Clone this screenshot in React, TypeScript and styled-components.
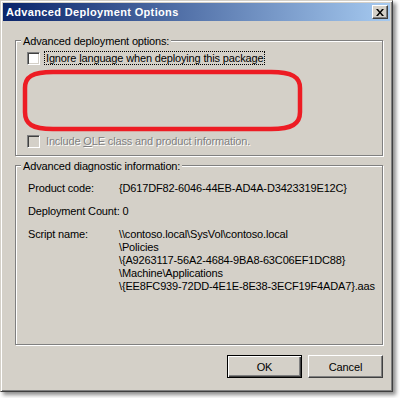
import React from "react";
import styled, { createGlobalStyle } from "styled-components";

const GlobalStyle = createGlobalStyle`
  html, body { margin: 0; padding: 0; background: #ffffff; }
  body { font-family: "Liberation Sans", Arial, sans-serif; font-size: 11px; }
  * { box-sizing: border-box; }
`;

const Page = styled.div`
  width: 400px;
  height: 398px;
`;

const Window = styled.div`
  width: 393px;
  height: 392px;
  background: #d4d0c8;
  border: 1px solid;
  border-color: #d4d0c8 #404040 #404040 #d4d0c8;
  box-shadow: inset 1px 1px 0 #ffffff, inset -1px -1px 0 #808080,
    3px 3px 4px rgba(0, 0, 0, 0.45);
  padding: 2px;
  display: flex;
  flex-direction: column;
`;

const TitleBar = styled.div`
  height: 18px;
  flex: none;
  display: flex;
  align-items: center;
  padding-left: 3px;
  background: linear-gradient(to right, #0a246a, #a6caf0);
  color: #ffffff;
  font-weight: bold;
  font-size: 11px;
`;

const TitleText = styled.span`
  line-height: 13px;
  letter-spacing: 0.35px;
`;

const CloseButton = styled.div`
  width: 16px;
  height: 14px;
  margin-left: auto;
  margin-right: 2px;
  background: #d4d0c8;
  border: 1px solid;
  border-color: #ffffff #404040 #404040 #ffffff;
  box-shadow: inset -1px -1px 0 #808080;
  display: flex;
  align-items: center;
  justify-content: center;
`;

const Body = styled.div`
  flex: 1;
  display: flex;
  flex-direction: column;
  padding: 19px 7px 11px 12px;
  color: #000000;
  letter-spacing: -0.15px;
`;

const GroupBox = styled.div<{ $h: number; $gap?: number }>`
  height: ${(p) => p.$h}px;
  margin-top: ${(p) => p.$gap ?? 0}px;
  border: 1px solid #808080;
  box-shadow: 1px 1px 0 #ffffff, inset 1px 1px 0 #ffffff;
  display: flex;
  flex-direction: column;
  align-items: flex-start;
`;

const GroupTitle = styled.div`
  margin: -6px 0 0 5px;
  padding: 0 2px;
  background: #d4d0c8;
  line-height: 13px;
`;

const GroupContent = styled.div<{ $pad: number; $top: number }>`
  padding-left: ${(p) => p.$pad}px;
  margin-top: ${(p) => p.$top}px;
  display: flex;
  flex-direction: column;
  align-items: flex-start;
  width: 100%;
`;

const CheckRow = styled.div<{ $top?: number }>`
  display: flex;
  align-items: center;
  height: 14px;
  gap: 4px;
  margin-top: ${(p) => p.$top ?? 0}px;
`;

const CheckBox = styled.span<{ $disabled?: boolean }>`
  width: 13px;
  height: 13px;
  flex: none;
  background: ${(p) => (p.$disabled ? "#d4d0c8" : "#ffffff")};
  border: 1px solid;
  border-color: #808080 #ffffff #ffffff #808080;
  box-shadow: inset 1px 1px 0 #404040, inset -1px -1px 0 #d4d0c8;
`;

const CheckLabel = styled.span<{ $focus?: boolean; $disabled?: boolean }>`
  line-height: 12px;
  padding: 0 1px;
  border: 1px ${(p) => (p.$focus ? "dotted #000000" : "solid transparent")};
  color: ${(p) => (p.$disabled ? "#808080" : "#000000")};
  text-shadow: ${(p) => (p.$disabled ? "1px 1px 0 #ffffff" : "none")};
  white-space: nowrap;
`;

const AccessKey = styled.span`
  text-decoration: underline;
`;

const Annotation = styled.svg`
  display: block;
  margin: 3px 0 0 -6px;
  flex: none;
`;

const InfoGrid = styled.div`
  display: grid;
  grid-template-columns: 91px auto;
  row-gap: 10px;
  line-height: 13px;
  white-space: nowrap;
`;

const InfoWide = styled.div`
  grid-column: 1 / span 2;
`;

const InfoValue = styled.div`
  display: flex;
  flex-direction: column;
`;

const ButtonRow = styled.div`
  display: flex;
  justify-content: flex-end;
  gap: 6px;
  margin-top: 10px;
`;

const Button = styled.div<{ $default?: boolean }>`
  width: 75px;
  height: 23px;
  background: #d4d0c8;
  display: flex;
  align-items: center;
  justify-content: center;
  font-size: 11px;
  color: #000000;
  border: 1px solid;
  border-color: ${(p) =>
    p.$default ? "#000000" : "#ffffff #404040 #404040 #ffffff"};
  box-shadow: ${(p) =>
    p.$default
      ? "inset 1px 1px 0 #ffffff, inset -1px -1px 0 #404040, inset -2px -2px 0 #808080"
      : "inset -1px -1px 0 #808080"};
`;

const scriptLines = [
  "\\\\contoso.local\\SysVol\\contoso.local",
  "\\Policies",
  "\\{A9263117-56A2-4684-9BA8-63C06EF1DC88}",
  "\\Machine\\Applications",
  "\\{EE8FC939-72DD-4E1E-8E38-3ECF19F4ADA7}.aas",
];

export default function App() {
  return (
    <Page>
      <GlobalStyle />
      <Window>
        <TitleBar>
          <TitleText>Advanced Deployment Options</TitleText>
          <CloseButton>
            <svg width="8" height="7" viewBox="0 0 8 7">
              <path d="M0 0h2l2 2.5L6 0h2L5 3.5 8 7H6L4 4.5 2 7H0l3-3.5z" fill="#000" />
            </svg>
          </CloseButton>
        </TitleBar>
        <Body>
          <GroupBox $h={116}>
            <GroupTitle>Advanced deployment options:</GroupTitle>
            <GroupContent $pad={11} $top={3}>
              <CheckRow>
                <CheckBox />
                <CheckLabel $focus>
                  Ignore <AccessKey>l</AccessKey>anguage when deploying this package
                </CheckLabel>
              </CheckRow>
              <Annotation width="282" height="64" viewBox="0 0 282 64">
                <path
                  d="M32 4 H250 C271 4 279 9 279 20 V44 C279 56 271 61 250 61 H32 C11 61 4 56 4 44 V20 C4 9 11 4 32 4 Z"
                  fill="none"
                  stroke="#ed1c24"
                  strokeWidth="4.5"
                />
              </Annotation>
              <CheckRow $top={2}>
                <CheckBox $disabled />
                <CheckLabel $disabled>
                  Include <AccessKey>O</AccessKey>LE class and product information.
                </CheckLabel>
              </CheckRow>
            </GroupContent>
          </GroupBox>
          <GroupBox $h={180} $gap={9}>
            <GroupTitle>Advanced diagnostic information:</GroupTitle>
            <GroupContent $pad={12} $top={9}>
              <InfoGrid>
                <div>Product code:</div>
                <div>{"{D617DF82-6046-44EB-AD4A-D3423319E12C}"}</div>
                <InfoWide>Deployment Count: 0</InfoWide>
                <div>Script name:</div>
                <InfoValue>
                  {scriptLines.map((l) => (
                    <span key={l}>{l}</span>
                  ))}
                </InfoValue>
              </InfoGrid>
            </GroupContent>
          </GroupBox>
          <ButtonRow>
            <Button $default>OK</Button>
            <Button>Cancel</Button>
          </ButtonRow>
        </Body>
      </Window>
    </Page>
  );
}
